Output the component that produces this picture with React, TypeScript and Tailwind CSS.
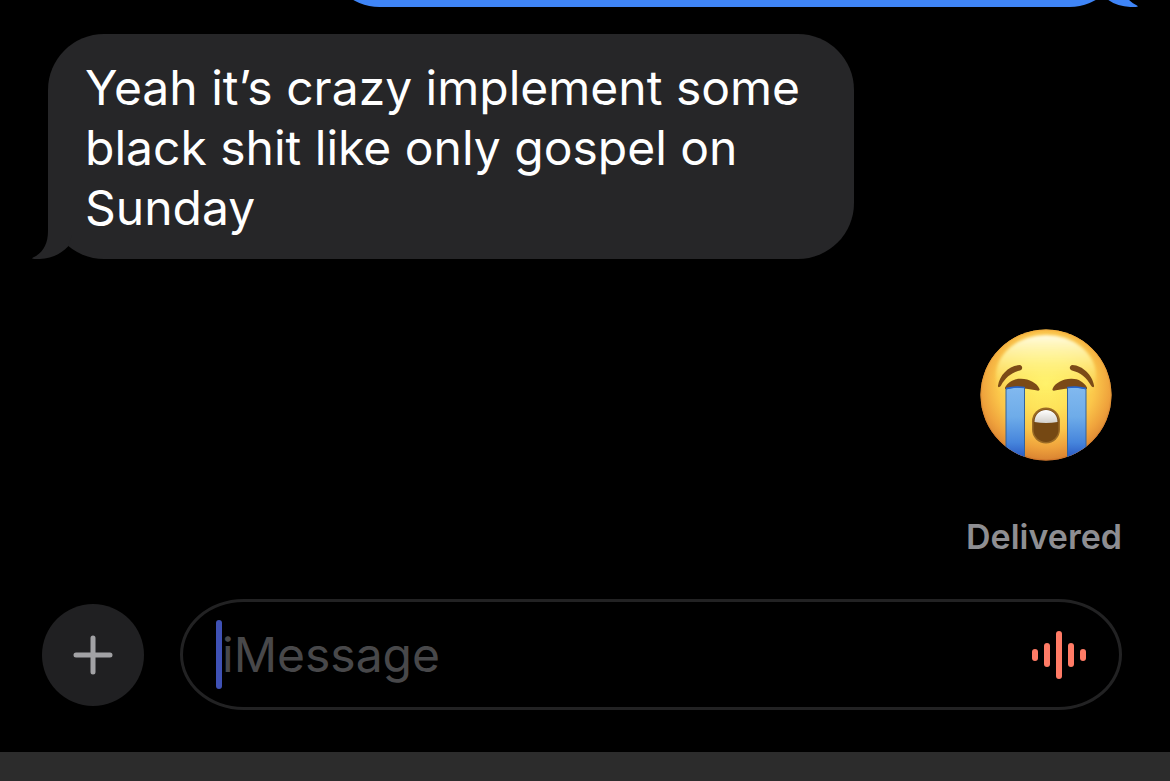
import type { ReactNode } from 'react';

function BubbleTail({ className }: { className: string }) {
  return (
    <svg viewBox="0 0 40 60" className={`absolute bottom-0 h-15 w-10 ${className}`} fill="currentColor" aria-hidden="true">
      <path d="M16 0V32C16 45 11 54 1 58.500C-.2 59.200 0 60 2 60C16 60.600 27 57 36 47.500L40 36V0Z" />
    </svg>
  );
}

function Bubble({ outgoing = false, children }: { outgoing?: boolean; children: ReactNode }) {
  return (
    <div
      className={`relative rounded-[56px] pt-6 pr-[54px] pb-[21px] pl-[37px] text-[48px] leading-[60px] ${
        outgoing ? 'w-[74%] self-end bg-[#3f85f7] text-[#3f85f7]' : 'self-start bg-[#262628] text-[#262628]'
      }`}
    >
      <BubbleTail className={outgoing ? '-right-4 -scale-x-100' : '-left-4'} />
      <p className="relative text-white">{children}</p>
    </div>
  );
}

function CryingFace() {
  return (
    <svg viewBox="0 0 132 132" className="h-[132px] w-[132px]" role="img" aria-label="Loudly crying face">
      <defs>
        <radialGradient id="face" cx="66" cy="54" r="79" gradientUnits="userSpaceOnUse">
          <stop offset="0" stopColor="#fff168" />
          <stop offset=".35" stopColor="#fee259" />
          <stop offset=".62" stopColor="#fbc64a" />
          <stop offset=".82" stopColor="#efa23c" />
          <stop offset="1" stopColor="#d67f30" />
        </radialGradient>
        <linearGradient id="shine" x1="0" y1="5" x2="0" y2="66" gradientUnits="userSpaceOnUse">
          <stop offset="0" stopColor="#fffce6" />
          <stop offset=".4" stopColor="#fff8a2" stopOpacity=".75" />
          <stop offset="1" stopColor="#fff25e" stopOpacity="0" />
        </linearGradient>
        <linearGradient id="rim" x1="0" y1="0" x2="0" y2="1">
          <stop offset="0" stopColor="#f3b03f" />
          <stop offset="1" stopColor="#cf742a" />
        </linearGradient>
        <linearGradient id="tear" x1="0" y1="58" x2="0" y2="132" gradientUnits="userSpaceOnUse">
          <stop offset="0" stopColor="#82b9ef" />
          <stop offset=".4" stopColor="#6eace9" />
          <stop offset=".75" stopColor="#4685dc" />
          <stop offset="1" stopColor="#2450bd" />
        </linearGradient>
        <linearGradient id="teeth" x1="0" y1="0" x2="0" y2="1">
          <stop offset="0" stopColor="#ffffff" />
          <stop offset="1" stopColor="#d3d0cb" />
        </linearGradient>
        <clipPath id="faceClip">
          <circle cx="66" cy="66" r="65.5" />
        </clipPath>
        <clipPath id="mouthClip">
          <rect x="53.500" y="80.500" width="25" height="32.500" rx="12.500" />
        </clipPath>
        <filter id="soften">
          <feGaussianBlur stdDeviation="1.500" />
        </filter>
      </defs>
      <circle cx="66" cy="66" r="65.5" fill="url(#face)" />
      <circle cx="66" cy="66" r="65" fill="none" stroke="url(#rim)" strokeWidth="1" />
      <ellipse cx="66" cy="47" rx="50" ry="41" fill="url(#shine)" filter="url(#soften)" />
      <g fill="#7b4a17">
        <path d="M18 56.500C19.500 46 29 36.500 39.500 36C43 36.500 43 40.500 40 41.500C31.500 43.500 25.500 48.500 21 56.500C19.500 59 17.500 58.500 18 56.500Z" />
        <path d="M114 56.500C112.500 46 102.500 36.500 92.500 36C89 36.500 89 40.500 92 41.500C100.500 43.500 106.500 48.500 111 56.500C112.500 59 114.500 58.500 114 56.500Z" />
        <path d="M25 58.500C28 53 34 49.500 41 49.800C49.500 50 57 54 59.500 60C60 62 58 61.800 56 61.300C46 59 35 58.500 25 60Z" />
        <path d="M107 58.500C104 53 98 49.500 91 49.800C82.500 50 75 54 72.500 60C72 62 74 61.800 76 61.300C86 59 97 58.500 107 60Z" />
      </g>
      <g clipPath="url(#faceClip)" fill="url(#tear)" stroke="#34639a" strokeWidth="1">
        <path d="M26 60Q35 57 44.500 58.500V134H26Z" />
        <path d="M106 60Q97 57 87.500 58.500V134H106Z" />
      </g>
      <g fill="none" stroke="#2464cf" strokeWidth="1.500">
        <path d="M26 59.500Q35 57 44.500 58.500" />
        <path d="M106 59.500Q97 57 87.500 58.500" />
      </g>
      <rect x="52" y="78.500" width="28" height="36" rx="14" fill="#9a6a25" />
      <g clipPath="url(#mouthClip)">
        <rect x="52" y="78" width="28" height="36" fill="#754813" />
        <path d="M54.500 93C54.500 77 77.500 77 77.500 93Q66 95 54.500 93Z" fill="url(#teeth)" />
      </g>
    </svg>
  );
}

function WaveformIcon() {
  return (
    <svg viewBox="0 0 54 48" className="h-12 w-[54px]" fill="#ff7b66" aria-hidden="true">
      <rect x="0" y="18" width="6" height="12" rx="3" />
      <rect x="12" y="12" width="6" height="24" rx="3" />
      <rect x="24" y="0" width="6" height="48" rx="3" />
      <rect x="36" y="12" width="6" height="24" rx="3" />
      <rect x="48" y="18" width="6" height="12" rx="3" />
    </svg>
  );
}

function Composer() {
  return (
    <form className="flex items-center gap-9 pt-[42px] pr-12 pb-[42px] pl-[42px]" onSubmit={(e) => e.preventDefault()}>
      <button type="button" aria-label="Add attachment" className="flex h-[102px] w-[102px] shrink-0 items-center justify-center rounded-full bg-[#202022]">
        <svg viewBox="0 0 40 40" className="h-10 w-10" stroke="#a2a2a5" strokeWidth="5" strokeLinecap="round" aria-hidden="true">
          <path d="M20 3V37M3 20H37" />
        </svg>
      </button>
      <div className="flex h-[111px] min-w-0 flex-1 items-center rounded-[64px/56px] border-3 border-[#222223] pr-[33px] pl-[33px]">
        <span className="h-[69px] w-1.5 shrink-0 rounded-full bg-[#3f51b5]" />
        <input
          type="text"
          aria-label="iMessage"
          placeholder="iMessage"
          className="min-w-0 flex-1 bg-transparent text-[48px] leading-[60px] text-white outline-none placeholder:text-[#48484a]"
        />
        <button type="button" aria-label="Record audio" className="shrink-0">
          <WaveformIcon />
        </button>
      </div>
    </form>
  );
}

export default function App() {
  return (
    <div className="flex h-screen flex-col overflow-hidden bg-black font-['Inter',sans-serif]">
      <main className="flex min-h-0 flex-1 flex-col justify-end overflow-hidden">
        <div className="flex flex-col px-12">
          <Bubble outgoing>
            <span className="block h-[60px]" />
          </Bubble>
          <div className="mt-[27px] flex flex-col">
            <Bubble>
              Yeah it’s crazy implement some
              <br />
              black shit like only gospel on
              <br />
              Sunday
            </Bubble>
          </div>
          <div className="mt-[70px] mr-2.5 self-end">
            <CryingFace />
          </div>
          <p className="mt-14 self-end text-[34px] leading-10 font-semibold text-[#8e8e92]">Delivered</p>
        </div>
      </main>
      <Composer />
      <div className="h-[29px] shrink-0 bg-[#2c2c2c]" />
    </div>
  );
}
